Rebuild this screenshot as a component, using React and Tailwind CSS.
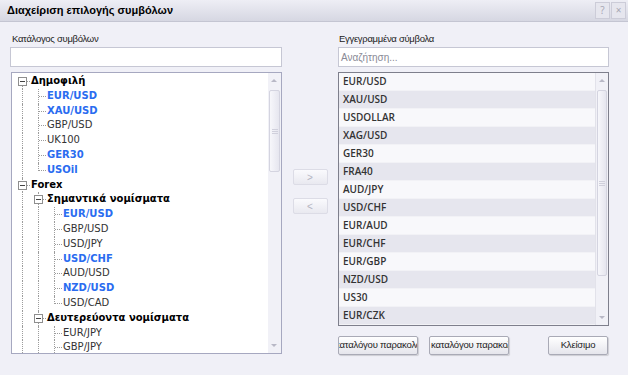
const tree = [
  { label: 'Δημοφιλή', d: 0, folder: true, first: true, next: true, g: [] },
  { label: 'EUR/USD', d: 1, blue: true, g: [true] },
  { label: 'XAU/USD', d: 1, blue: true, g: [true] },
  { label: 'GBP/USD', d: 1, g: [true] },
  { label: 'UK100', d: 1, g: [true] },
  { label: 'GER30', d: 1, blue: true, g: [true] },
  { label: 'USOil', d: 1, blue: true, last: true, g: [true] },
  { label: 'Forex', d: 0, folder: true, next: true, g: [] },
  { label: 'Σημαντικά νομίσματα', d: 1, folder: true, next: true, g: [true] },
  { label: 'EUR/USD', d: 2, blue: true, g: [true, true] },
  { label: 'GBP/USD', d: 2, g: [true, true] },
  { label: 'USD/JPY', d: 2, g: [true, true] },
  { label: 'USD/CHF', d: 2, blue: true, g: [true, true] },
  { label: 'AUD/USD', d: 2, g: [true, true] },
  { label: 'NZD/USD', d: 2, blue: true, g: [true, true] },
  { label: 'USD/CAD', d: 2, last: true, g: [true, true] },
  { label: 'Δευτερεύοντα νομίσματα', d: 1, folder: true, next: true, g: [true] },
  { label: 'EUR/JPY', d: 2, g: [true, true] },
  { label: 'GBP/JPY', d: 2, g: [true, true] },
]

const symbols = [
  'EUR/USD', 'XAU/USD', 'USDOLLAR', 'XAG/USD', 'GER30', 'FRA40', 'AUD/JPY',
  'USD/CHF', 'EUR/AUD', 'EUR/CHF', 'EUR/GBP', 'NZD/USD', 'US30', 'EUR/CZK',
]

const dot = 'border-dotted border-[#9c9c9c]'

function TreeRow({ node }) {
  return (
    <div className="flex h-[14.8px] items-stretch whitespace-nowrap">
      {node.g.map((on, k) => (
        <span key={k} className="relative w-[16px] shrink-0">
          {on && <span className={`absolute left-[8px] top-0 bottom-0 border-l ${dot}`} />}
        </span>
      ))}
      <span className="relative w-[16px] shrink-0">
        {node.folder ? (
          <>
            {!node.first && <span className={`absolute left-[8px] top-0 h-[4px] border-l ${dot}`} />}
            {node.next && <span className={`absolute left-[8px] top-[11px] bottom-0 border-l ${dot}`} />}
            <span className={`absolute left-[13px] right-0 top-[7px] border-t ${dot}`} />
            <span className="absolute left-[4px] top-[3px] w-[9px] h-[9px] border border-[#8e8e8e] bg-white flex items-center justify-center">
              <span className="w-[5px] border-t border-[#444]" />
            </span>
          </>
        ) : (
          <>
            <span className={`absolute left-[8px] top-0 border-l ${dot} ${node.last ? 'h-[8px]' : 'bottom-0'}`} />
            <span className={`absolute left-[9px] right-0 top-[7px] border-t ${dot}`} />
          </>
        )}
      </span>
      <span
        className={`pl-[1px] text-[10px] leading-[14.8px] ${
          node.folder ? 'font-bold text-black' : node.blue ? 'font-bold text-[#2a6cf0]' : 'text-[#333]'
        }`}
      >
        {node.label}
      </span>
    </div>
  )
}

function ScrollBar({ thumbTop, thumbH, dark }) {
  return (
    <div className={`relative w-[13px] h-full bg-[#f1f1f7] ${dark ? 'border-l border-[#e2e2ea]' : ''}`}>
      <span className="absolute left-[3px] top-[6px] w-0 h-0 border-l-[3px] border-r-[3px] border-b-[3px] border-l-transparent border-r-transparent border-b-[#b8b8c6]" />
      <div
        className="absolute left-[1px] right-[1px] rounded-[2px] border border-[#d4d4e0] bg-gradient-to-r from-[#f7f7fb] to-[#e6e6ef] flex flex-col items-center justify-center gap-[1px]"
        style={{ top: thumbTop, height: thumbH }}
      >
        <span className="w-[6px] border-t border-[#d0d0dc]" />
        <span className="w-[6px] border-t border-[#d0d0dc]" />
        <span className="w-[6px] border-t border-[#d0d0dc]" />
      </div>
      <span className="absolute left-[3px] bottom-[6px] w-0 h-0 border-l-[3px] border-r-[3px] border-t-[3px] border-l-transparent border-r-transparent border-t-[#b8b8c6]" />
    </div>
  )
}

function Btn({ children, className = '', align = 'justify-center' }) {
  return (
    <div
      className={`h-[19px] flex items-center ${align} overflow-hidden whitespace-nowrap rounded-[2px] border border-[#a9aab6] bg-gradient-to-b from-white to-[#e5e5ec] shadow-[1px_1px_1px_rgba(0,0,0,0.15)] text-[9.5px] tracking-[-0.2px] text-[#222] ${className}`}
    >
      <span className="px-[1px]">{children}</span>
    </div>
  )
}

export default function App() {
  return (
    <div className="w-[628px] h-[375px] bg-[#f0f0f7] flex flex-col overflow-hidden" style={{ fontFamily: '"Open Sans", sans-serif' }}>
      {/* Title bar */}
      <div className="h-[22px] shrink-0 flex items-center justify-between pl-[7px] pr-[2px] bg-gradient-to-b from-[#eeeef5] to-[#d6d7e2] border-b border-[#c4c5d2]">
        <span className="text-[11px] font-bold text-black" style={{ fontFamily: '"Liberation Sans", sans-serif' }}>
          Διαχείριση επιλογής συμβόλων
        </span>
        <div className="flex gap-[1px]">
          <span className="w-[15px] h-[17px] flex items-center justify-center border border-[#ccccd8] bg-[#e6e6ee] text-[10px] text-[#a5a5b2]">?</span>
          <span className="w-[15px] h-[17px] flex items-center justify-center border border-[#ccccd8] bg-[#e6e6ee] text-[10px] text-[#a5a5b2]">×</span>
        </div>
      </div>

      <div className="flex pt-[9px]" style={{ fontFamily: '"Liberation Sans", sans-serif' }}>
        {/* Left column */}
        <div className="ml-[10px] w-[272px] flex flex-col">
          <div className="h-[16px] pl-[2px] text-[9.5px] text-[#222] tracking-[-0.3px] leading-[16px]">Κατάλογος συμβόλων</div>
          <div className="h-[20px] bg-white border border-[#c6c7d4]" />
          <div className="mt-[5px] h-[282px] ml-[1px] bg-white border border-[#a6a8c0] flex" style={{ fontFamily: '"DejaVu Sans", sans-serif' }}>
            <div className="flex-1 pl-[2px] pt-[1px] overflow-hidden">
              {tree.map((n, i) => (
                <TreeRow key={i} node={n} />
              ))}
            </div>
            <ScrollBar thumbTop={17} thumbH={82} />
          </div>
        </div>

        {/* Middle buttons */}
        <div className="w-[56px] flex flex-col items-center pt-[138px] gap-[13px]">
          <div className="w-[35px] h-[16px] rounded-[2px] border border-[#dcdce6] bg-gradient-to-b from-[#fafafd] to-[#e9e9f0] flex items-center justify-center text-[10px] text-[#b4b4c2]">&gt;</div>
          <div className="w-[35px] h-[16px] rounded-[2px] border border-[#dcdce6] bg-gradient-to-b from-[#fafafd] to-[#e9e9f0] flex items-center justify-center text-[10px] text-[#b4b4c2]">&lt;</div>
        </div>

        {/* Right column */}
        <div className="w-[271px] flex flex-col">
          <div className="h-[16px] text-[9.5px] text-[#222] tracking-[-0.3px] leading-[16px] pl-[1px]">Εγγεγραμμένα σύμβολα</div>
          <div className="h-[20px] bg-white border border-[#c6c7d4] flex items-center pl-[2px] text-[10px] text-[#8a8a96]">Αναζήτηση...</div>
          <div className="mt-[5px] h-[254px] bg-white border border-[#7e7f8c] flex" style={{ fontFamily: '"Open Sans", sans-serif' }}>
            <div className="flex-1 overflow-hidden">
              {symbols.map((s, i) => (
                <div
                  key={s}
                  className={`h-[18px] flex items-center pl-[4px] text-[10px] font-semibold text-[#333] border-b border-[#f2f2f6] ${
                    i % 2 ? 'bg-[#e6e6ee]' : 'bg-[#f8f8fb]'
                  }`}
                >
                  {s}
                </div>
              ))}
            </div>
            <ScrollBar thumbTop={17} thumbH={186} dark />
          </div>
          <div className="mt-[10px] flex items-center">
            <Btn className="w-[80px]">καταλόγου παρακολο</Btn>
            <Btn className="w-[80px] ml-[11px]" align="justify-start">καταλόγου παρακολούθησης</Btn>
            <Btn className="w-[60px] ml-[39px]">Κλείσιμο</Btn>
          </div>
        </div>
      </div>
    </div>
  )
}
